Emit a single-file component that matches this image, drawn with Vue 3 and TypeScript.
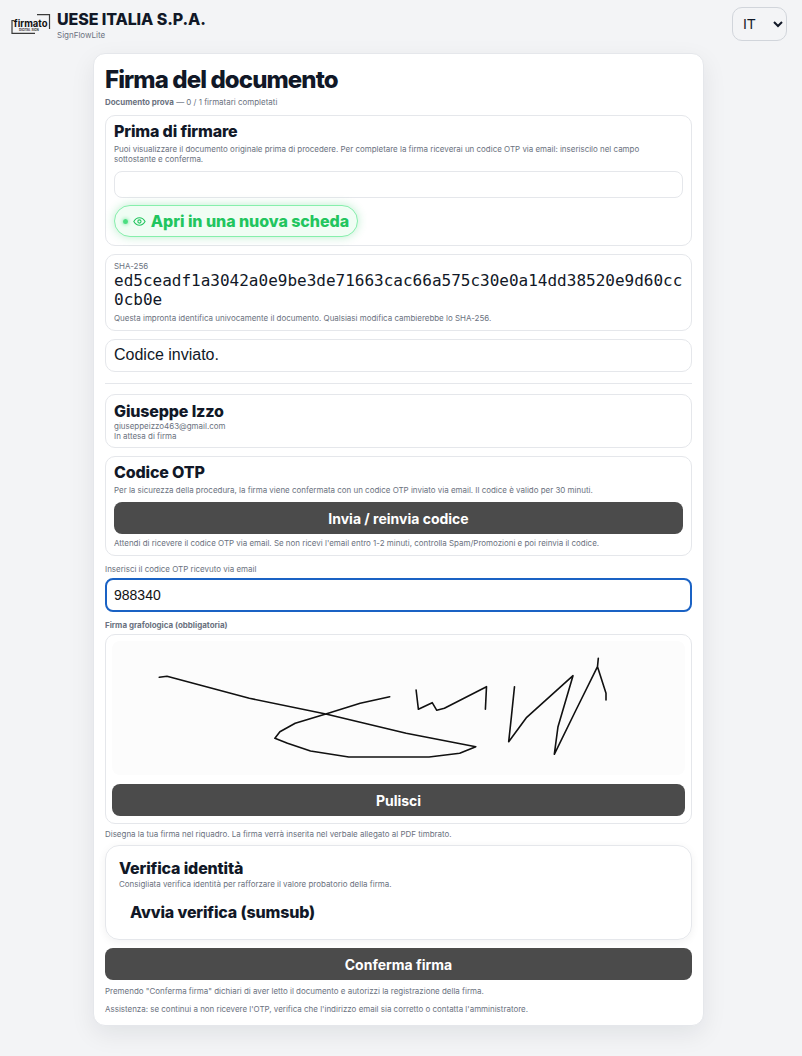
<script setup lang="ts">
import { ref } from 'vue'

const otp = ref('988340')
const lang = ref('IT')

// signature strokes, in canvas pixels
const strokes: string[] = [
  '47.3,36.3 55,35.3 137.3,57.3 213.8,73 294.2,92.3 363.8,105.7 347.7,112.3 317.1,116 236.8,116 198.5,110 175.5,102.3 162.9,97.3 167.9,90.7 183.2,82.3 213.8,73 248.2,62.3 277.7,55.7',
  '304.1,49 306.4,68.3 320.2,61.7 324.8,69.3 332.4,67.3 374.5,45.7 373.4,68.3',
  '402.5,45.7 399.4,75.7 396.7,100.7 414.7,76.3 461,34.7 446,85.7 442.3,113.3 464,69 485.5,25.7 486.3,17.3 485.5,25.7 494,52.3 494,59',
]
</script>

<template>
  <header class="topbar">
    <div class="brand">
      <svg class="logo" width="40" height="21" viewBox="0 0 40 21">
        <path d="M26 .7H38.500V15M3.500 6.500H1V19.300H24" fill="none" stroke="#3a3a3a" stroke-width="1.200" />
        <text x="2.800" y="13" class="logo-word">firmato</text>
        <text x="8" y="17" class="logo-sub">DIGITAL SIGN</text>
      </svg>
      <div>
        <div class="company">UESE ITALIA S.P.A.</div>
        <div class="product">SignFlowLite</div>
      </div>
    </div>
    <select v-model="lang" class="lang">
      <option>IT</option>
      <option>EN</option>
    </select>
  </header>

  <main class="card">
    <h1>Firma del documento</h1>
    <p class="small sub"><b>Documento prova</b> — 0 / 1 firmatari completati</p>

    <section class="box">
      <h3>Prima di firmare</h3>
      <p class="small">Puoi visualizzare il documento originale prima di procedere. Per completare la firma riceverai un codice OTP via email: inseriscilo nel campo sottostante e conferma.</p>
      <input class="blank" type="text" />
      <button class="open">
        <span class="dot"></span>
        <svg width="13" height="13" viewBox="0 0 24 24" fill="none" stroke="#22c55e" stroke-width="2">
          <path d="M1.500 12S5.500 5 12 5s10.500 7 10.500 7-4 7-10.500 7S1.500 12 1.500 12Z" />
          <circle cx="12" cy="12" r="3" />
        </svg>
        Apri in una nuova scheda
      </button>
    </section>

    <section class="box sha">
      <div class="small">SHA-256</div>
      <div class="hash">ed5ceadf1a3042a0e9be3de71663cac66a575c30e0a14dd38520e9d60cc0cb0e</div>
      <p class="small">Questa impronta identifica univocamente il documento. Qualsiasi modifica cambierebbe lo SHA-256.</p>
    </section>

    <section class="box status">Codice inviato.</section>

    <hr />

    <section class="box signer">
      <h3>Giuseppe Izzo</h3>
      <div class="small">giuseppeizzo463@gmail.com</div>
      <div class="small">In attesa di firma</div>
    </section>

    <section class="box otp">
      <h3>Codice OTP</h3>
      <p class="small">Per la sicurezza della procedura, la firma viene confermata con un codice OTP inviato via email. Il codice è valido per 30 minuti.</p>
      <button class="dark">Invia / reinvia codice</button>
      <p class="small">Attendi di ricevere il codice OTP via email. Se non ricevi l'email entro 1-2 minuti, controlla Spam/Promozioni e poi reinvia il codice.</p>
    </section>

    <label class="small otp-label">Inserisci il codice OTP ricevuto via email</label>
    <input v-model="otp" class="otp-input" type="text" />

    <div class="small sign-label"><b>Firma grafologica (obbligatoria)</b></div>
    <section class="pad">
      <svg class="canvas" viewBox="0 0 573 134" width="573" height="134">
        <polyline v-for="(s, i) in strokes" :key="i" :points="s" fill="none" stroke="#111" stroke-width="1.600" stroke-linejoin="round" stroke-linecap="round" />
      </svg>
      <button class="dark">Pulisci</button>
    </section>
    <p class="small note">Disegna la tua firma nel riquadro. La firma verrà inserita nel verbale allegato al PDF timbrato.</p>

    <section class="verify">
      <h3>Verifica identità</h3>
      <p class="small">Consigliata verifica identità per rafforzare il valore probatorio della firma.</p>
      <button class="plain">Avvia verifica (sumsub)</button>
    </section>

    <button class="dark confirm">Conferma firma</button>
    <p class="small foot">Premendo "Conferma firma" dichiari di aver letto il documento e autorizzi la registrazione della firma.</p>
    <p class="small foot2">Assistenza: se continui a non ricevere l'OTP, verifica che l'indirizzo email sia corretto o contatta l'amministratore.</p>
  </main>
</template>

<style>
html, body {
  background: #f3f4f6;
}
</style>

<style scoped>
.topbar {
  display: flex;
  justify-content: space-between;
  align-items: flex-start;
  padding: 7px 15px 0 11px;
  height: 46px;
  box-sizing: content-box;
  font-family: Inter, sans-serif;
  color: #111827;
}
.brand {
  display: flex;
  align-items: flex-start;
  gap: 6px;
  padding-top: 4px;
}
.logo {
  margin-top: 3px;
}
.logo-word {
  font: 700 9.500px Inter, sans-serif;
  fill: #111;
}
.logo-sub {
  font: 700 3px Inter, sans-serif;
  fill: #333;
}
.company {
  font-size: 16px;
  font-weight: 800;
  letter-spacing: -0.1px;
  line-height: 17px;
}
.product {
  font-size: 8px;
  line-height: 10px;
  color: #6b7280;
  margin-top: 2px;
}
.lang {
  width: 55px;
  height: 34px;
  border: 1px solid #d1d5db;
  border-radius: 10px;
  background: transparent;
  color: #111827;
  font: 14px "Liberation Sans", sans-serif;
  padding: 0 6px;
}

.card {
  width: 611px;
  margin: 0 0 31px 93px;
  box-sizing: border-box;
  padding: 11px;
  background: #fff;
  border: 1px solid #e5e7eb;
  border-radius: 12px;
  box-shadow: 0 8px 24px rgba(17, 24, 39, 0.08);
  font-family: Inter, sans-serif;
  color: #111827;
}
h1 {
  margin: 0;
  font-size: 24px;
  font-weight: 800;
  letter-spacing: -0.9px;
  line-height: 30px;
}
h3 {
  margin: 0;
  font-size: 16px;
  font-weight: 800;
  letter-spacing: -0.15px;
  line-height: 20px;
}
p {
  margin: 0;
}
.small {
  font-size: 7.960px;
  line-height: 10px;
  color: #6b7280;
}
.sub {
  margin-top: 2px;
  margin-bottom: 8px;
}
.box {
  border: 1px solid #e5e7eb;
  border-radius: 10px;
  padding: 5px 8px;
  margin-bottom: 8px;
}
.box p.small {
  margin-top: 3px;
}
.blank {
  display: block;
  width: 100%;
  box-sizing: border-box;
  height: 27px;
  margin-top: 7px;
  border: 1px solid #e5e7eb;
  border-radius: 8px;
  background: #fff;
}
.open {
  display: flex;
  align-items: center;
  gap: 5px;
  height: 32px;
  width: 244px;
  margin: 7px 0 3px;
  padding: 0 8px;
  box-sizing: border-box;
  border: 1px solid #86efac;
  border-radius: 16px;
  background: #f0fdf4;
  box-shadow: 0 0 10px rgba(34, 197, 94, 0.3);
  color: #22c55e;
  font: 800 16px Inter, sans-serif;
  letter-spacing: -0.05px;
  white-space: nowrap;
}
.dot {
  width: 5px;
  height: 5px;
  border-radius: 50%;
  background: #4ade80;
  box-shadow: 0 0 4px #4ade80;
}
.sha {
  padding: 6px 8px 7px;
}
.sha p.small {
  margin-top: 4px;
}
.hash {
  font: 16px/19px "DejaVu Sans Mono", monospace;
  color: #111827;
  word-break: break-all;
}
.status {
  font: 16px/20px "Liberation Sans", sans-serif;
  padding: 5px 8px 6px;
  margin-bottom: 11px;
}
hr {
  border: 0;
  border-top: 1px solid #e5e7eb;
  margin: 0 0 10px;
}
.signer {
  padding: 6px 8px;
}
.dark {
  display: block;
  width: 100%;
  height: 32px;
  border: 0;
  border-radius: 8px;
  background: #4b4b4b;
  color: #fff;
  font: 700 14px Inter, sans-serif;
}
.otp {
  padding-bottom: 7px;
}
.otp .dark {
  margin-top: 7px;
}
.otp .dark + p.small {
  margin-top: 4px;
}
.otp-label {
  display: block;
  margin-top: 7px;
}
.otp-input {
  display: block;
  width: 100%;
  box-sizing: border-box;
  height: 34px;
  margin-top: 4px;
  padding: 0 7px;
  border: 2px solid #1a62c4;
  border-radius: 8px;
  outline: 0;
  font: 14px "Liberation Sans", sans-serif;
  color: #111;
}
.sign-label {
  margin-top: 8px;
}
.pad {
  margin-top: 4px;
  border: 1px solid #e5e7eb;
  border-radius: 10px;
  padding: 6px 6px 7px;
}
.canvas {
  display: block;
  background: #fcfcfc;
  border-radius: 8px;
  margin-bottom: 9px;
}
.note {
  margin-top: 5px;
}
.verify {
  margin-top: 6px;
  height: 95px;
  box-sizing: border-box;
  padding: 12px 13px;
  border: 1px solid #e5e7eb;
  border-radius: 14px;
  box-shadow: 0 2px 8px rgba(17, 24, 39, 0.06);
}
.verify p {
  margin-top: 1px;
}
.plain {
  display: block;
  margin-top: 9px;
  padding: 4px 11px;
  border: 0;
  background: transparent;
  color: #111827;
  font: 800 16px Inter, sans-serif;
  letter-spacing: -0.15px;
}
.confirm {
  margin-top: 8px;
}
.foot {
  margin-top: 6px;
}
.foot2 {
  margin-top: 8px;
}
</style>
